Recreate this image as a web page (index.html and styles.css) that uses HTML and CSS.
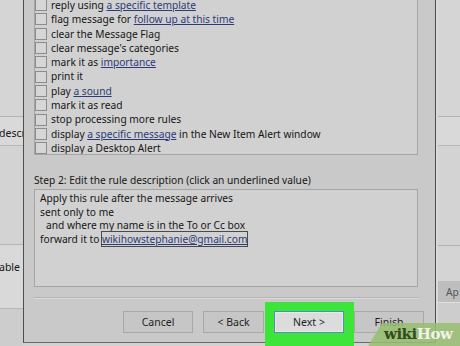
FILE: index.html
```html
<!DOCTYPE html>
<html lang="en">
<head>
    <meta charset="UTF-8">
    <title>Rules Wizard</title>
    <link rel="stylesheet" href="styles.css">
</head>
<body>
    <div class="screen">
        <!-- Main window behind the wizard (left side) -->
        <aside class="side side-left">
            <div class="band band-head"></div>
            <div class="band band-row"><span class="cut-text">descri</span></div>
            <div class="band band-mid"></div>
            <div class="band band-row tall"><span class="cut-text">able r</span></div>
            <div class="band band-foot"></div>
        </aside>

        <!-- Rules Wizard dialog -->
        <main class="dialog">
            <div class="actions">
                <ul class="action-list">
                    <li><span class="check"></span>reply using <a href="#">a specific template</a></li>
                    <li><span class="check"></span>flag message for <a href="#">follow up at this time</a></li>
                    <li><span class="check"></span>clear the Message Flag</li>
                    <li><span class="check"></span>clear message's categories</li>
                    <li><span class="check"></span>mark it as <a href="#">importance</a></li>
                    <li><span class="check"></span>print it</li>
                    <li><span class="check"></span>play <a href="#">a sound</a></li>
                    <li><span class="check"></span>mark it as read</li>
                    <li><span class="check"></span>stop processing more rules</li>
                    <li><span class="check"></span>display <a href="#">a specific message</a> in the New Item Alert window</li>
                    <li><span class="check"></span>display a Desktop Alert</li>
                </ul>
            </div>

            <p class="step-label">Step 2: Edit the rule description (click an underlined value)</p>
            <div class="desc">
                <p>Apply this rule after the message arrives</p>
                <p>sent only to me</p>
                <p class="indent">and where my name is in the To or Cc box</p>
                <p>forward it to <a href="#" class="focused">wikihowstephanie@gmail.com</a></p>
            </div>

            <div class="sep"></div>

            <div class="buttons">
                <button class="btn">Cancel</button>
                <button class="btn btn-back">&lt; Back</button>
                <span class="highlight"><button class="btn btn-next">Next &gt;</button></span>
                <button class="btn">Finish</button>
            </div>
        </main>

        <!-- Main window behind the wizard (right side) -->
        <aside class="side side-right">
            <div class="band band-head"></div>
            <div class="band band-row"></div>
            <div class="band band-mid"></div>
            <div class="band band-gap"></div>
            <div class="band band-apply"><span>Ap</span></div>
            <div class="band band-foot"></div>
        </aside>

        <div class="watermark"><span class="wm-wiki">wiki</span><span class="wm-how">How</span></div>
    </div>
</body>
</html>
```

FILE: styles.css
```css
/* Base */
body {
    margin: 0;
    background-color: #d2d2d2;
    font-family: "Noto Sans", "Open Sans", sans-serif;
    font-size: 10.2px;
    color: #161616;
}

.screen {
    position: relative;
    width: 460px;
    height: 346px;
    overflow: hidden;
    display: flex;
}

/* Window behind the dialog */
.side {
    display: flex;
    flex-direction: column;
    overflow: hidden;
    white-space: nowrap;
}

.side-left {
    width: 23px;
    flex-shrink: 0;
}

.side-right {
    flex: 1;
    border-left: 2px solid #dadada;
}

.band-head {
    height: 116px;
    background-color: #d5d5d5;
    border-bottom: 1px solid #b4b4b4;
}

.band-row {
    height: 29px;
    background-color: #d9d9d9;
    border-bottom: 1px solid #b8b8b8;
    display: flex;
    align-items: center;
    padding-top: 4px;
    box-sizing: border-box;
}

.band-row.tall {
    height: 64px;
    align-items: flex-start;
    padding-top: 15px;
}

.band-mid {
    height: 98px;
    background-color: #d3d3d3;
    border-bottom: 1px solid #b6b6b6;
}

.band-foot {
    flex: 1;
    background-color: #cdcdcd;
}

.side-right .band-mid {
    height: 99px;
    border-bottom: 1px solid #b0b0b0;
}

.band-gap {
    height: 35px;
    background-color: #d4d4d4;
}

.band-apply {
    height: 21px;
    background-color: #bebebe;
    border-bottom: 1px solid #e0e0e0;
    color: #555;
    padding-left: 8px;
    display: flex;
    align-items: center;
}

.cut-text {
    margin-left: -1px;
    font-size: 10.5px;
}

/* Dialog */
.dialog {
    width: 413px;
    height: 343px;
    box-sizing: border-box;
    flex-shrink: 0;
    background-color: #c9c9c9;
    border-left: 1px solid #4e4e4e;
    border-right: 1px solid #4e4e4e;
    border-bottom: 1px solid #6a6a6a;
    padding: 0 17px 0 10px;
    display: flex;
    flex-direction: column;
}

.actions {
    height: 154px;
    flex-shrink: 0;
    background-color: #d1d1d1;
    border: 1px solid #a5a5a5;
    border-top: none;
    overflow: hidden;
}

.action-list {
    list-style: none;
    margin: -2px 0 0;
    padding: 0;
}

.action-list li {
    height: 14.3px;
    line-height: 14.3px;
    display: flex;
    align-items: center;
    white-space: pre;
}

.check {
    width: 10px;
    height: 10px;
    border: 1px solid #8c8c8c;
    background-color: #d6d6d6;
    margin: 0 4px 0 0;
    flex-shrink: 0;
}

a {
    color: #2d3a78;
    text-decoration: underline;
}

.step-label {
    margin: 18px 0 2px;
    line-height: 14px;
}

.desc {
    height: 98px;
    flex-shrink: 0;
    background-color: #d1d1d1;
    border: 1px solid #a5a5a5;
    padding: 2px 5px;
    box-sizing: border-box;
}

.desc p {
    margin: 0;
    line-height: 13.6px;
}

.desc .indent {
    padding-left: 6px;
}

.focused {
    outline: 1px solid #4a4a4a;
}

.sep {
    margin-top: 10px;
    height: 1px;
    background-color: #b5b5b5;
    border-bottom: 1px solid #dadada;
}

/* Buttons */
.buttons {
    margin-top: 12px;
    display: flex;
    justify-content: flex-end;
    gap: 10px;
    margin-right: -6px;
}

.btn {
    width: 70px;
    height: 22px;
    padding: 0;
    font-family: inherit;
    font-size: 10.5px;
    color: #1e1e1e;
    background-color: #c6c6c6;
    border: 1px solid #a8a8a8;
}

.btn-back {
    width: 61px;
}

.highlight {
    position: relative;
    z-index: 0;
    display: flex;
}

.highlight::before {
    content: "";
    position: absolute;
    top: -9px;
    left: -9px;
    right: -10px;
    bottom: -16px;
    background-color: #3de43a;
    z-index: -1;
}

.btn-next {
    background-color: #dcdcdc;
    border: 1px solid #4f8fbf;
    box-shadow: inset 0 0 0 1px #e8e8e8;
}

/* wikiHow watermark */
.watermark {
    position: absolute;
    right: 0;
    bottom: 0;
    width: 92px;
    height: 23px;
    padding-left: 16px;
    box-sizing: border-box;
    background-color: rgba(150, 190, 110, 0.85);
    clip-path: polygon(14px 0, 100% 0, 100% 100%, 0 100%);
    font-family: "DejaVu Serif", serif;
    font-weight: bold;
    font-size: 15px;
    line-height: 23px;
    letter-spacing: -0.5px;
}

.wm-wiki {
    color: #304d1c;
}

.wm-how {
    color: #f2f2ea;
}
```
